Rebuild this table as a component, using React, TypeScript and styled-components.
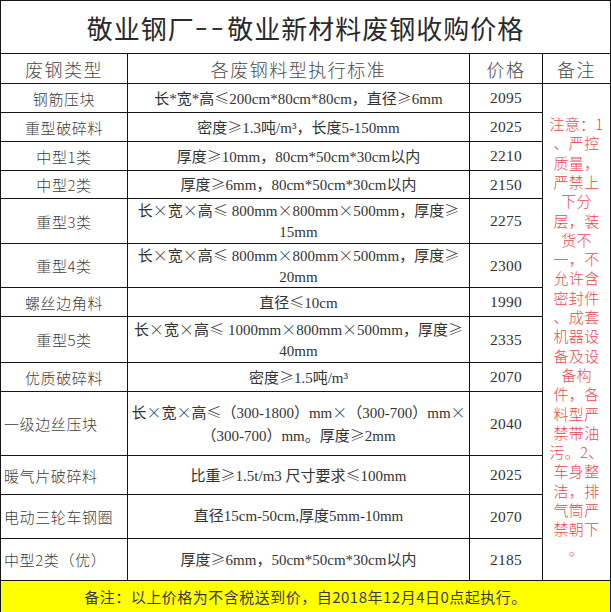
import styled, { createGlobalStyle } from 'styled-components';

const GlobalStyle = createGlobalStyle`
  html, body {
    margin: 0;
    padding: 0;
    background: #fff;
    overflow: hidden;
  }
`;

interface PriceRow {
  name: string;
  spec: string;
  price: string;
  h: number;
  left?: boolean;
}

const rows: PriceRow[] = [
  { name: '钢筋压块', spec: '长*宽*高≤200cm*80cm*80cm，直径≥6mm', price: '2095', h: 29 },
  { name: '重型破碎料', spec: '密度≥1.3吨/m³，长度5-150mm', price: '2025', h: 29 },
  { name: '中型1类', spec: '厚度≥10mm，80cm*50cm*30cm以内', price: '2210', h: 29 },
  { name: '中型2类', spec: '厚度≥6mm，80cm*50cm*30cm以内', price: '2150', h: 28 },
  { name: '重型3类', spec: '长×宽×高≤ 800mm×800mm×500mm，厚度≥\n15mm', price: '2275', h: 45 },
  { name: '重型4类', spec: '长×宽×高≤ 800mm×800mm×500mm，厚度≥\n20mm', price: '2300', h: 44 },
  { name: '螺丝边角料', spec: '直径≤10cm', price: '1990', h: 29 },
  { name: '重型5类', spec: '长×宽×高≤ 1000mm×800mm×500mm，厚度≥\n40mm', price: '2335', h: 46 },
  { name: '优质破碎料', spec: '密度≥1.5吨/m³', price: '2070', h: 29 },
  {
    name: '一级边丝压块',
    spec: '长×宽×高≤（300-1800）mm×（300-700）mm×\n（300-700）mm。厚度≥2mm',
    price: '2040',
    h: 64,
    left: true,
  },
  { name: '暖气片破碎料', spec: '比重≥1.5t/m3 尺寸要求≤100mm', price: '2025', h: 39, left: true },
  { name: '电动三轮车钢圈', spec: '直径15cm-50cm,厚度5mm-10mm', price: '2070', h: 44, left: true },
  { name: '中型2类（优）', spec: '厚度≥6mm，50cm*50cm*30cm以内', price: '2185', h: 42, left: true },
];

const noteLines = [
  '注意：1', '、严控', '质量，', '严禁上', '下分', '层，装', '货不', '一，不',
  '允许含', '密封件', '、成套', '机器设', '备及设', '备构', '件，各', '料型严',
  '禁带油', '污。2、', '车身整', '洁，排', '气筒严', '禁朝下', '。',
];

// full-width symbols rendered in the CJK face
const renderSpec = (text: string) =>
  text.split('\n').map((line, li) => (
    <SpecLine key={li}>
      {line.split(/([×≤≥])/).map((part, i) =>
        /^[×≤≥]$/.test(part) ? <Sym key={i}>{part}</Sym> : part
      )}
    </SpecLine>
  ));

export default function App() {
  const template = ['53px', '30px', ...rows.map((r) => `${r.h}px`), '31px'].join(' ');

  return (
    <>
      <GlobalStyle />
      <Sheet $rows={template}>
        <TitleCell>
          敬业钢厂<Dash>--</Dash>敬业新材料废钢收购价格
        </TitleCell>

        <HeadCell>废钢类型</HeadCell>
        <HeadCell>各废钢料型执行标准</HeadCell>
        <HeadCell>价格</HeadCell>
        <HeadCell>备注</HeadCell>

        <NoteCell $span={rows.length}>
          <NoteText>
            {noteLines.map((l, i) => (
              <NoteLine key={i}>{l}</NoteLine>
            ))}
          </NoteText>
        </NoteCell>

        {rows.map((r) => (
          <RowGroup key={r.name + r.price}>
            <NameCell $left={r.left}>{r.name}</NameCell>
            <SpecCell>
              <SpecText>{renderSpec(r.spec)}</SpecText>
            </SpecCell>
            <PriceCell>{r.price}</PriceCell>
          </RowGroup>
        ))}

        <FooterCell>备注：以上价格为不含税送到价，自2018年12月4日0点起执行。</FooterCell>
      </Sheet>
    </>
  );
}

const LINE = '#151515';
const CJK = '"Noto Sans CJK SC", "Noto Sans", sans-serif';

const Sheet = styled.div<{ $rows: string }>`
  display: grid;
  grid-template-columns: 127px 342px 73px 68px;
  grid-template-rows: ${({ $rows }) => $rows};
  width: 611px;
  box-sizing: border-box;
  border-top: 1px solid ${LINE};
  border-left: 1px solid ${LINE};
  background: #fff;
  color: #2a2a2a;
  font-family: ${CJK};
`;

const RowGroup = styled.div`
  display: contents;
`;

const Cell = styled.div`
  box-sizing: border-box;
  border-right: 1px solid ${LINE};
  border-bottom: 1px solid ${LINE};
  display: flex;
  align-items: center;
  justify-content: center;
  text-align: center;
  min-width: 0;
  overflow: hidden;
`;

const TitleCell = styled(Cell)`
  grid-column: 1 / -1;
  font-size: 26px;
  letter-spacing: 1px;
  color: #2a2a2a;
  padding-top: 1px;
`;

const Dash = styled.span`
  display: inline-block;
  font-family: "Liberation Sans", sans-serif;
  letter-spacing: 2px;
  transform: scaleX(1.5);
  margin: 0 6px 0 5px;
  color: #333;
`;

const HeadCell = styled(Cell)`
  font-size: 18px;
  font-weight: 300;
  letter-spacing: 1.5px;
  color: #4a4a4a;
`;

const NameCell = styled(Cell)<{ $left?: boolean }>`
  justify-content: ${({ $left }) => ($left ? 'flex-start' : 'center')};
  padding-left: ${({ $left }) => ($left ? '3px' : '0')};
  font-size: 15px;
  font-weight: 300;
  letter-spacing: 0.6px;
  white-space: nowrap;
  color: #404040;
`;

const SpecCell = styled(Cell)`
  font-family: "Liberation Serif", ${CJK};
  font-size: 15px;
  color: #333;
`;

const SpecText = styled.div`
  display: flex;
  flex-direction: column;
  align-items: center;
  line-height: 21px;
  white-space: nowrap;
`;

const SpecLine = styled.div``;

const Sym = styled.span`
  display: inline-block;
  width: 1em;
  text-align: center;
  font-family: ${CJK};
  font-weight: 300;
`;

const PriceCell = styled(Cell)`
  font-family: "Liberation Serif", serif;
  font-size: 15.5px;
  letter-spacing: 0.3px;
  color: #333;
`;

const NoteCell = styled(Cell)<{ $span: number }>`
  grid-column: 4;
  grid-row: 3 / span ${({ $span }) => $span};
  padding-top: 8px;
`;

const NoteText = styled.div`
  font-size: 15px;
  font-weight: 300;
  line-height: 19.3px;
  letter-spacing: 0.3px;
  color: #ec474c;
  white-space: nowrap;
`;

const NoteLine = styled.div``;

const FooterCell = styled(Cell)`
  grid-column: 1 / -1;
  border-bottom: none;
  background: #ffff00;
  font-size: 15px;
  letter-spacing: 0.5px;
  color: #3a3a3a;
`;
